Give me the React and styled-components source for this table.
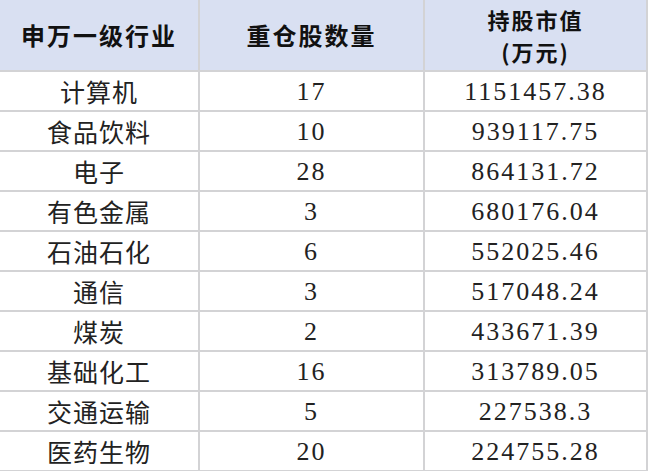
import React from "react";
import styled, { createGlobalStyle } from "styled-components";

const GlobalStyle = createGlobalStyle`
  body {
    margin: 0;
    background: #ffffff;
  }
`;

const Table = styled.div`
  width: 648px;
  height: 471px;
  overflow: hidden;
  background: #ffffff;
`;

const Row = styled.div`
  display: grid;
  grid-template-columns: 200px 225px 223px;
  height: ${(props) => (props.$header ? "72px" : "40px")};
  background: ${(props) => (props.$header ? "#d9e0f2" : "#ffffff")};
  border-bottom: 2px solid #d3d3d5;
  box-sizing: border-box;
`;

const Cell = styled.div`
  display: flex;
  flex-direction: column;
  align-items: center;
  justify-content: center;
  border-right: 2px solid #d3d3d5;
  box-sizing: border-box;
  color: #1a1a1a;
`;

const HeadText = styled.span`
  font-family: "Noto Sans CJK SC", sans-serif;
  font-weight: 700;
  font-size: ${(props) => (props.$small ? "22px" : "24px")};
  letter-spacing: 2px;
  line-height: ${(props) => (props.$small ? "32px" : "30px")};
  color: #111111;
`;

const NameText = styled.span`
  font-family: "Noto Sans CJK SC", sans-serif;
  font-weight: 400;
  font-size: 25px;
  letter-spacing: 1px;
  line-height: 30px;
  color: #222222;
`;

const NumText = styled.span`
  font-family: "Liberation Serif", serif;
  font-size: 26px;
  letter-spacing: 2px;
  line-height: 30px;
  padding-top: 2px;
  color: #222222;
`;

const rows = [
  ["计算机", "17", "1151457.38"],
  ["食品饮料", "10", "939117.75"],
  ["电子", "28", "864131.72"],
  ["有色金属", "3", "680176.04"],
  ["石油石化", "6", "552025.46"],
  ["通信", "3", "517048.24"],
  ["煤炭", "2", "433671.39"],
  ["基础化工", "16", "313789.05"],
  ["交通运输", "5", "227538.3"],
  ["医药生物", "20", "224755.28"],
];

export default function App() {
  return (
    <>
      <GlobalStyle />
      <Table>
        <Row $header>
          <Cell>
            <HeadText>申万一级行业</HeadText>
          </Cell>
          <Cell>
            <HeadText>重仓股数量</HeadText>
          </Cell>
          <Cell>
            <HeadText $small>持股市值</HeadText>
            <HeadText $small>(万元)</HeadText>
          </Cell>
        </Row>
        {rows.map(([name, count, value]) => (
          <Row key={name}>
            <Cell>
              <NameText>{name}</NameText>
            </Cell>
            <Cell>
              <NumText>{count}</NumText>
            </Cell>
            <Cell>
              <NumText>{value}</NumText>
            </Cell>
          </Row>
        ))}
      </Table>
    </>
  );
}
